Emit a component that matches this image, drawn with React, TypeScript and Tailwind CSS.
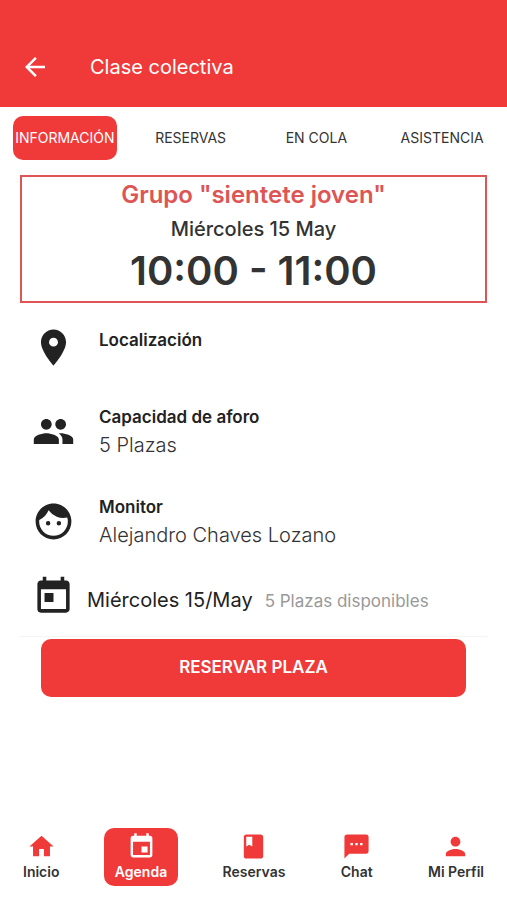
import { useState } from 'react';
import {
  MdArrowBack,
  MdClass,
  MdEvent,
  MdHome,
  MdPeople,
  MdPerson,
  MdPlace,
  MdTextsms,
  MdToday,
} from 'react-icons/md';

function FaceIcon({ size }: { size: number }) {
  return (
    <svg viewBox="0 0 24 24" width={size} height={size} fill="currentColor" aria-hidden="true">
      <path d="M9 11.75a1.25 1.25 0 1 0 0 2.5 1.25 1.25 0 0 0 0-2.5zm6 0a1.25 1.25 0 1 0 0 2.5 1.25 1.25 0 0 0 0-2.5zM12 2C6.48 2 2 6.48 2 12s4.48 10 10 10 10-4.48 10-10S17.52 2 12 2zm0 18c-4.41 0-8-3.59-8-8 0-.29.02-.58.05-.86 2.36-1.05 4.23-2.98 5.21-5.37a9.97 9.97 0 0 0 10.41 3.97c.21.71.33 1.47.33 2.26 0 4.41-3.59 8-8 8z" />
    </svg>
  );
}

const tabs = ['INFORMACIÓN', 'RESERVAS', 'EN COLA', 'ASISTENCIA'];

const navItems = [
  { label: 'Inicio', icon: MdHome },
  { label: 'Agenda', icon: MdEvent },
  { label: 'Reservas', icon: MdClass },
  { label: 'Chat', icon: MdTextsms },
  { label: 'Mi Perfil', icon: MdPerson },
];

const details = [
  { title: 'Localización', value: '', icon: MdPlace },
  { title: 'Capacidad de aforo', value: '5 Plazas', icon: MdPeople },
  { title: 'Monitor', value: 'Alejandro Chaves Lozano', icon: FaceIcon },
];

export default function App() {
  const [tab, setTab] = useState('INFORMACIÓN');

  return (
    <div className="flex min-h-screen flex-col bg-white font-[Inter,sans-serif] text-[#222]">
      <header className="flex items-center gap-10 bg-[#f03a3a] px-5 pt-12 pb-[21px] text-white">
        <button type="button" aria-label="Volver" className="py-1">
          <MdArrowBack size={30} />
        </button>
        <h1 className="text-xl">Clase colectiva</h1>
      </header>

      <div className="grid grid-cols-4 px-0.5 pt-[9px]">
        {tabs.map((item) => (
          <button
            key={item}
            type="button"
            onClick={() => setTab(item)}
            className={`mx-auto flex h-11 w-26 items-center justify-center rounded-[10px] text-sm ${
              tab === item ? 'bg-[#f03a3a] text-white' : 'text-[#333]'
            }`}
          >
            {item}
          </button>
        ))}
      </div>

      <main className="flex-1 px-5 pt-[15px]">
        <section className="border-2 border-[#dd5555] pt-0.5 pb-1.5 text-center">
          <h2 className="text-2xl leading-8 font-semibold text-[#dd5555]">
            Grupo "sientete joven"
          </h2>
          <p className="text-xl leading-9 font-medium text-[#333]">Miércoles 15 May</p>
          <p className="text-[40px] leading-12 font-semibold text-[#333]">10:00 - 11:00</p>
        </section>

        <ul className="flex flex-col gap-[34px] pt-[23px]">
          {details.map(({ title, value, icon: Icon }) => (
            <li key={title} className="flex items-center gap-6 px-3">
              <div className="shrink-0">
                <Icon size={43} />
              </div>
              <div className="self-start">
                <h3 className="text-[17px] leading-7 font-semibold">{title}</h3>
                {value && <p className="text-xl leading-7 font-light text-[#333]">{value}</p>}
              </div>
            </li>
          ))}
        </ul>

        <div className="flex items-center gap-3 border-b border-gray-100 px-3 pt-[26px] pb-[18px]">
          <MdToday size={43} />
          <div className="flex items-baseline gap-3 pt-2">
            <p className="text-xl">Miércoles 15/May</p>
            <p className="text-[17px] text-[#999]">5 Plazas disponibles</p>
          </div>
        </div>

        <div className="px-[21px] pt-0.5">
          <button
            type="button"
            className="h-[58px] w-full rounded-[10px] bg-[#f03a3a] text-[17px] font-semibold text-white"
          >
            RESERVAR PLAZA
          </button>
        </div>
      </main>

      <nav className="flex justify-between px-3 pb-3.5">
        {navItems.map(({ label, icon: Icon }) => (
          <a
            key={label}
            href="#"
            className={`flex h-[58px] flex-col items-center rounded-[10px] px-[11px] pt-1 text-sm leading-[22px] font-semibold ${
              label === 'Agenda' ? 'bg-[#f03a3a] text-white' : 'text-[#333]'
            }`}
          >
            <Icon size={29} className={label === 'Agenda' ? 'text-white' : 'text-[#f03a3a]'} />
            {label}
          </a>
        ))}
      </nav>
    </div>
  );
}
